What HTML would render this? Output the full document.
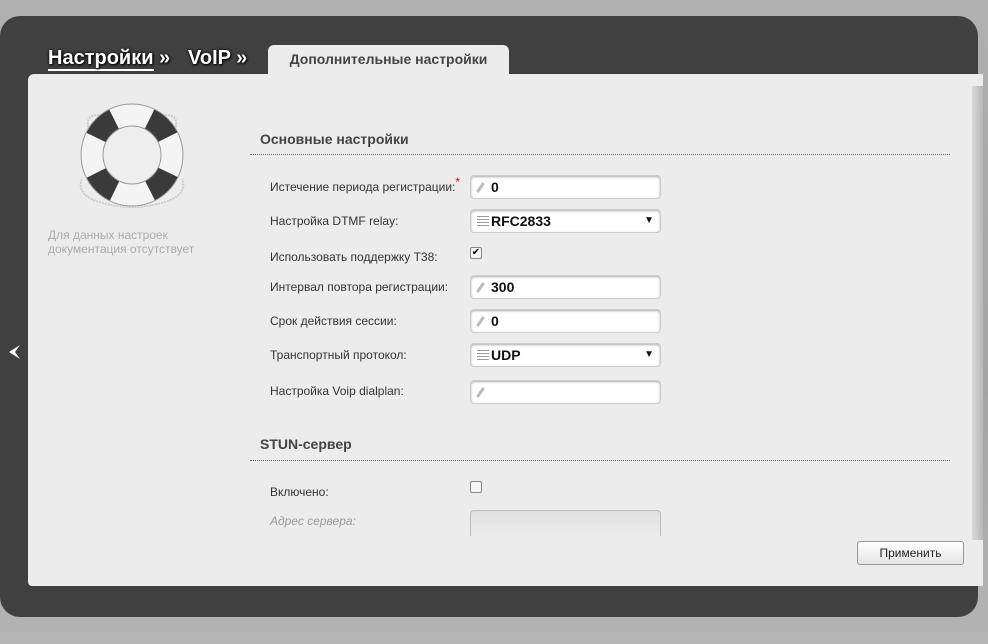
<!DOCTYPE html>
<html><head><meta charset="utf-8"><style>
*{box-sizing:border-box;margin:0;padding:0}
body{width:988px;height:644px;overflow:hidden;background:linear-gradient(#b0b0b0,#a4a4a4 60%,#b4b4b4);font-family:"Liberation Sans",sans-serif;position:relative}
.dark{position:absolute;left:0;top:16px;width:978px;height:601px;background:#404040;border-radius:20px}
.light{position:absolute;left:28px;top:74px;width:955px;height:512px;background:#ececec;border-radius:6px 0 0 4px}
.strip{position:absolute;left:972px;top:86px;width:11px;height:454px;background:linear-gradient(90deg,#d8d8d8,#b8b8b8)}
.bc{position:absolute;top:47px;color:#fff;font-weight:bold;font-size:20px;text-shadow:1px 1px 2px #000,0 0 3px #000}
.tab{position:absolute;left:268px;top:45px;width:241px;height:30px;background:#ececec;border-radius:6px 6px 0 0;font-weight:bold;font-size:14px;color:#444;text-align:center;line-height:28px}
.h{position:absolute;left:260px;font-weight:bold;font-size:14px;color:#444}
.hr{position:absolute;left:250px;width:700px;border-top:1px dotted #666}
.lb{position:absolute;left:270px;font-size:12px;color:#333}
.in{position:absolute;left:470px;width:191px;height:24px;background:#fff;border:1px solid #ccc;border-radius:4px;box-shadow:inset 0 1px 2px #aaa;font-weight:bold;font-size:14px;line-height:22px;padding-left:20px;color:#111}
.in:before{content:"";position:absolute;left:8px;top:6px;width:3px;height:11px;background:#bbb;transform:rotate(35deg)}
.sel:before{display:none}
.sel .ic{position:absolute;left:6px;top:6px;width:12px;height:11px;background:repeating-linear-gradient(#999 0 1px,transparent 1px 3px)}
.sel .ar{position:absolute;right:6px;top:0;font-size:10px}
.cb{position:absolute;left:470px;width:12px;height:12px;border:1px solid #888;border-radius:2px;background:#f4f4f4;font-size:10px;line-height:10px;text-align:center}
</style></head><body>
<div class="dark"></div>
<div class="light"></div>
<div class="strip"></div>
<div class="bc" style="left:48px"><span style="border-bottom:2px solid #fff">Настройки</span> »</div>
<div class="bc" style="left:188px">VoIP »</div>
<div class="tab">Дополнительные настройки</div>
<svg style="position:absolute;left:6px;top:343px" width="16" height="18" viewBox="0 0 16 18"><path d="M14 2 L3 9 L14 16 L9 9 Z" fill="#fff"/></svg>
<svg style="position:absolute;left:76px;top:103px" width="112" height="110" viewBox="0 0 112 110">
<path d="M6 76 Q0 90 20 98 Q56 110 92 98 Q112 90 106 76" fill="none" stroke="#ccc" stroke-width="2" stroke-dasharray="2 1"/>
<path d="M14 30 Q6 10 26 12 M98 30 Q106 10 86 12" fill="none" stroke="#ccc" stroke-width="2" stroke-dasharray="2 1"/>
<circle cx="56" cy="52" r="40" fill="none" stroke="#f4f4f4" stroke-width="22"/>
<circle cx="56" cy="52" r="40" fill="none" stroke="#3a3a3a" stroke-width="22" stroke-dasharray="26 36.8" stroke-dashoffset="-18"/>
<circle cx="56" cy="52" r="51" fill="none" stroke="#999" stroke-width="1"/>
<circle cx="56" cy="52" r="29" fill="#eeeeee" stroke="#999"/>
</svg>
<div style="position:absolute;left:48px;top:228px;font-size:12px;color:#aaa;line-height:14px">Для данных настроек<br>документация отсутствует</div>
<div class="h" style="top:131px">Основные настройки</div>
<div class="hr" style="top:154px"></div>
<div class="lb" style="top:180px">Истечение периода регистрации:<span style="color:#d00;position:relative;top:-5px">*</span></div>
<div class="in" style="top:175px">0</div>
<div class="lb" style="top:214px">Настройка DTMF relay:</div>
<div class="in sel" style="top:209px"><span class="ic"></span>RFC2833<span class="ar">▼</span></div>
<div class="lb" style="top:250px">Использовать поддержку T38:</div>
<div class="cb" style="top:247px">✔</div>
<div class="lb" style="top:280px">Интервал повтора регистрации:</div>
<div class="in" style="top:275px">300</div>
<div class="lb" style="top:314px">Срок действия сессии:</div>
<div class="in" style="top:309px">0</div>
<div class="lb" style="top:348px">Транспортный протокол:</div>
<div class="in sel" style="top:343px"><span class="ic"></span>UDP<span class="ar">▼</span></div>
<div class="lb" style="top:384px">Настройка Voip dialplan:</div>
<div class="in" style="top:380px"></div>
<div class="h" style="top:436px">STUN-сервер</div>
<div class="hr" style="top:460px"></div>
<div class="lb" style="top:485px">Включено:</div>
<div class="cb" style="top:481px"></div>
<div class="lb" style="top:514px;color:#999;font-style:italic">Адрес сервера:</div>
<div style="position:absolute;left:470px;top:510px;width:191px;height:26px;border:1px solid #bbb;border-bottom:none;border-radius:4px 4px 0 0;background:linear-gradient(#e0e0e0,#ececec)"></div>
<div style="position:absolute;left:857px;top:541px;width:107px;height:24px;border:1px solid #999;border-radius:3px;background:linear-gradient(#fff,#e4e4e4);font-size:12px;text-align:center;line-height:22px;color:#222">Применить</div>
</body></html>
